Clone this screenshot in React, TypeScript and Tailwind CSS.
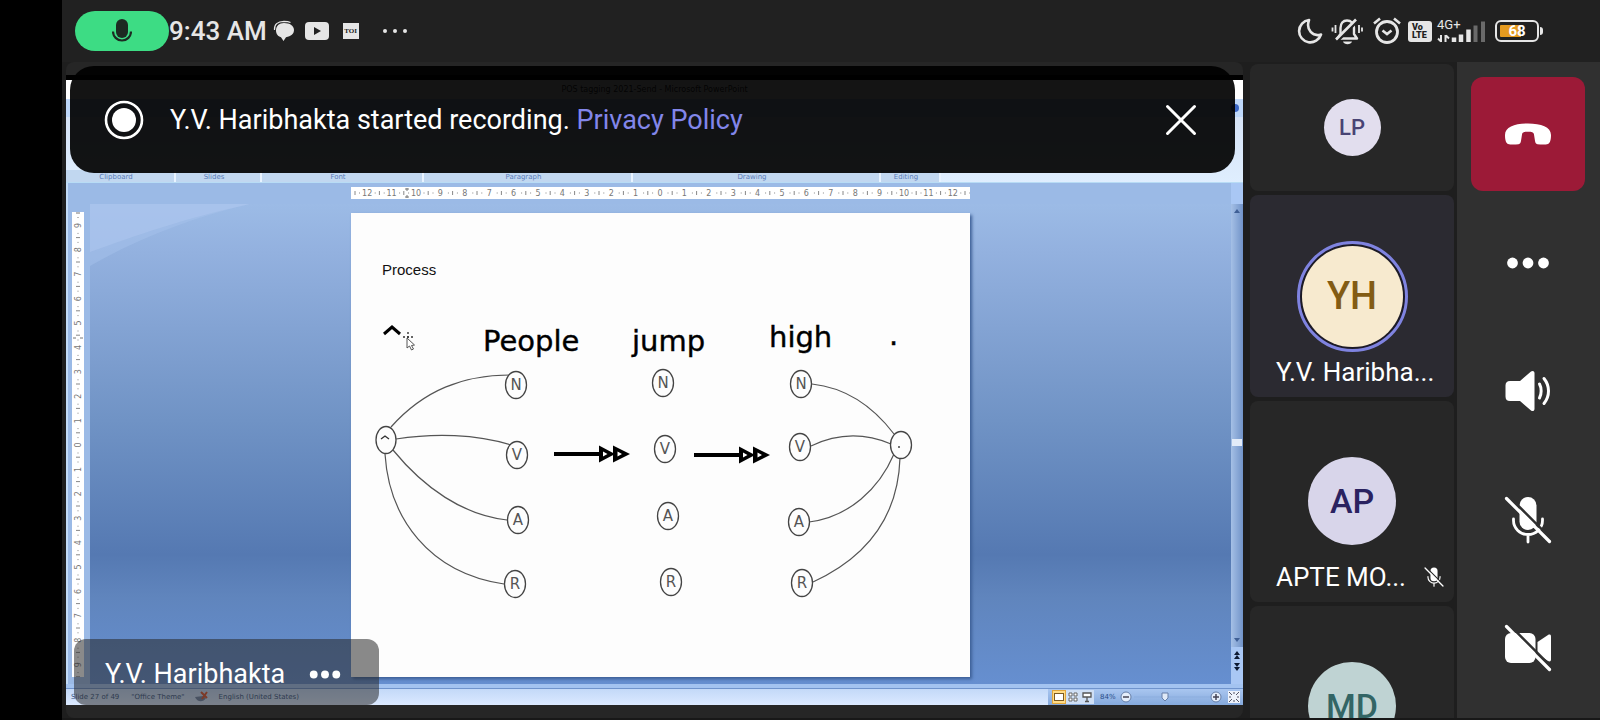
import React from "react";

const UNITS = Array.from({ length: 25 }, (_, i) => i - 12);
const V_UNITS = Array.from({ length: 19 }, (_, i) => i - 9);
const STEP = 24.4;

function MicGlyph({ className }: { className: string }) {
  return (
    <svg viewBox="0 0 20 24" className={className} aria-hidden="true">
      <rect x="4" y="0" width="12" height="19" rx="6" fill="#1d2a22" />
      <path d="M1 12.500a9 9 0 0 0 18 0" fill="none" stroke="#1d2a22" strokeWidth="2.200" />
    </svg>
  );
}

function MicOff({ className, cut }: { className: string; cut: string }) {
  return (
    <svg viewBox="0 0 48 48" className={className} aria-hidden="true">
      <rect x="15.500" y="1" width="17" height="33" rx="8.500" fill="#fff" />
      <path d="M9.500 23v1.500a14.500 14 0 0 0 29 0V23M24 39v7" fill="none" stroke="#fff" strokeWidth="2.800" strokeLinecap="round" />
      <path d="M4.500 0L49.500 45" stroke={cut} strokeWidth="2.600" />
      <path d="M2.500 2.500L45.500 45.500" stroke="#fff" strokeWidth="3.200" strokeLinecap="round" />
    </svg>
  );
}

function VideoOff() {
  return (
    <svg viewBox="0 0 48 48" className="size-12" aria-hidden="true">
      <rect x="1" y="9" width="30.500" height="30" rx="6" fill="#fff" />
      <path d="M33.500 18l10.500-7c1.500-1 3-.5 3 1.500v23c0 2-1.500 2.500-3 1.500l-10.500-7z" fill="#fff" />
      <path d="M4.500 0L49.500 45" stroke="#303030" strokeWidth="2.600" />
      <path d="M2.500 2.500L45.500 45.500" stroke="#fff" strokeWidth="3.200" strokeLinecap="round" />
    </svg>
  );
}

function Speaker() {
  return (
    <svg viewBox="0 0 48 48" className="size-12" aria-hidden="true">
      <path d="M6 14h10L27 4.600c1.500-1.200 3.500-.6 3.500 1.400v36c0 2-2 2.600-3.500 1.400L16 34H6c-3 0-4.500-1.500-4.500-4.500v-11C1.500 15.500 3 14 6 14z" fill="#fff" />
      <path d="M35.500 17c2.200 4 2.200 10 0 14M40 11.500c6 7.500 6 17.500 0 25" fill="none" stroke="#fff" strokeWidth="3" strokeLinecap="round" />
    </svg>
  );
}

function HangUp() {
  return (
    <svg viewBox="0 0 48 24" className="h-6 w-12" aria-hidden="true">
      <path d="M1 13C1 5 11 1.500 24 1.500S47 5 47 13c0 4.500-.8 8-3 9-2.500.8-7 .6-10.500.2-1.800-.2-2.300-2-2.600-4l-1-6.200c-.4-1.800-2-2.300-5.900-2.300s-5.500.5-5.900 2.300l-1 6.200c-.3 2-.8 3.800-2.600 4-3.500.4-8 .6-10.500-.2-2.200-1-3-4.500-3-9z" fill="#fff" />
    </svg>
  );
}

function Dots({ className }: { className: string }) {
  return (
    <svg viewBox="0 0 44 12" className={className} aria-hidden="true">
      <circle cx="6.500" cy="6" r="5.400" fill="#fff" />
      <circle cx="22" cy="6" r="5.400" fill="#fff" />
      <circle cx="37.500" cy="6" r="5.400" fill="#fff" />
    </svg>
  );
}

function StatusBar() {
  return (
    <header className="flex h-[62px] shrink-0 items-center justify-between pr-[57px] pl-[13px] text-[#e6e6e6]">
      <div className="flex items-center">
        <div className="flex h-10 w-[94px] items-center justify-center rounded-full bg-[#3ddc84]">
          <MicGlyph className="h-6 w-5" />
        </div>
        <span className="text-[26px] leading-8 font-medium">9:43 AM</span>
        <svg viewBox="0 0 22 22" className="ml-1.5 size-[22px]" aria-hidden="true">
          <path d="M11 3c6 0 10 2.800 10 7 0 3.800-3 6.500-8 7.200L10.500 21 8 17.200C5 16.500 3 13.800 3 10.500 3 6 6 3 11 3z" fill="#e6e6e6" />
          <path d="M1.500 10C1 4.500 4.500 1.500 11 1.300c3 0 5 .4 6.500 1.200" fill="none" stroke="#e6e6e6" strokeWidth="1.200" />
        </svg>
        <svg viewBox="0 0 24 18" className="ml-2.5 h-[18px] w-6" aria-hidden="true">
          <rect width="24" height="18" rx="4" fill="#e6e6e6" />
          <path d="M9 5l7 4-7 4z" fill="#212121" />
        </svg>
        <span className="ml-3.5 w-4 bg-[#e6e6e6] text-center font-['Liberation_Serif',serif] text-[7px] leading-4 font-bold text-[#212121]">TOI</span>
        <svg viewBox="0 0 26 6" className="ml-[23px] h-1.5 w-[26px]" aria-hidden="true">
          <circle cx="3" cy="3" r="2" fill="#e6e6e6" />
          <circle cx="13" cy="3" r="2" fill="#e6e6e6" />
          <circle cx="23" cy="3" r="2" fill="#e6e6e6" />
        </svg>
      </div>

      <div className="flex items-center">
        <svg viewBox="0 0 26 26" className="size-[26px]" aria-hidden="true">
          <path d="M12 2A11.200 11.200 0 1 0 24 16.500C16 19 8.500 12 12 2z" fill="none" stroke="#e6e6e6" strokeWidth="2.600" strokeLinejoin="round" />
        </svg>
        <svg viewBox="0 0 32 28" className="ml-2 h-7 w-8" aria-hidden="true">
          <path d="M6.500 21.500h19.500l-3-4.500V11c0-4.500-3-7.500-7-7.500S9.500 6.500 9.500 11v6z" fill="none" stroke="#e6e6e6" strokeWidth="2.400" strokeLinejoin="round" />
          <path d="M12 24.500h9c-1 3.500-8 3.500-9 0z" fill="#e6e6e6" />
          <path d="M4.500 8v8M1.500 10.500v4M28 8v8M31 10.500v4" stroke="#e6e6e6" strokeWidth="1.800" />
          <path d="M7 23.500L27 3.500" stroke="#212121" strokeWidth="2.600" />
          <path d="M5 22.500L25 2.500" stroke="#e6e6e6" strokeWidth="2.600" />
        </svg>
        <svg viewBox="0 0 28 28" className="ml-2.5 size-7" aria-hidden="true">
          <circle cx="14" cy="15" r="10.500" fill="none" stroke="#e6e6e6" strokeWidth="2.800" />
          <path d="M1 6.500l6-5M27 6.500l-6-5" stroke="#e6e6e6" strokeWidth="2.600" />
          <path d="M9.500 13.500l4.500 3.500 4.500-3.500" fill="none" stroke="#e6e6e6" strokeWidth="2.600" />
        </svg>
        <span className="ml-[7px] flex h-[21px] w-6 flex-col justify-center rounded-[3px] bg-[#e6e6e6] pl-1 text-[9px] leading-2 font-black text-[#212121]">
          <span>Vo</span>
          <span>LTE</span>
        </span>
        <div className="ml-[5px] flex h-7 w-[50px] flex-col">
          <span className="h-3 text-[13px] leading-4">4G+</span>
          <svg viewBox="0 0 50 28" className="-mt-3 h-7 w-[50px] shrink-0" aria-hidden="true">
            <path d="M4 18v7M1 21.500l3 3M8.500 25v-7M12 21.500l-3-3" stroke="#e6e6e6" strokeWidth="2" fill="none" />
            <path d="M17 25v-4.500M24 25v-7.500M31.500 25V12.500" stroke="#e6e6e6" strokeWidth="4.500" />
            <path d="M38.500 25V8.500M46 25V4.500" stroke="#6a6a6a" strokeWidth="4" />
          </svg>
        </div>
        <div className="ml-2 flex items-center">
          <div className="flex h-[22px] w-11 rounded-[6px] border-2 border-[#e6e6e6] bg-linear-to-r from-[#e59a1f] from-60% to-[#212121] to-60% bg-clip-content p-[3px]">
            <span className="flex-1 text-center text-[15px] leading-3 font-bold text-white">68</span>
          </div>
          <span className="ml-px h-2 w-[3px] rounded-r-sm bg-[#e6e6e6]" />
        </div>
      </div>
    </header>
  );
}

function HorizontalRuler() {
  return (
    <svg viewBox="0 0 619 12" className="h-3 w-full bg-white font-['DejaVu_Sans',sans-serif]" aria-hidden="true">
      {UNITS.map((n) => {
        const x = 309 + n * STEP;
        return (
          <g key={n}>
            <text x={x} y="9" fontSize="8" textAnchor="middle" fill="#777">
              {Math.abs(n)}
            </text>
            <path d={`M${x + 12.2} 4v4M${x + 7.5} 6h1M${x + 16.500} 6h1`} stroke="#888" strokeWidth="1" />
          </g>
        );
      })}
      <path d="M4 4v4M8 6h1" stroke="#888" />
      <path d="M54 2h4M54 10h4M56 1v3M56 8v3" stroke="#777" />
    </svg>
  );
}

function VerticalRuler() {
  return (
    <svg viewBox="0 0 12 465" className="h-[465px] w-3 shrink-0 bg-white font-['DejaVu_Sans',sans-serif]" aria-hidden="true">
      {V_UNITS.map((n) => {
        const y = 233 + n * STEP;
        return (
          <g key={n}>
            <text fontSize="8" textAnchor="middle" fill="#777" transform={`translate(9 ${y}) rotate(-90)`}>
              {Math.abs(n)}
            </text>
            <path d={`M4 ${y + 12.2}h4M6 ${y + 7.500}v1M6 ${y + 16.500}v1`} stroke="#888" strokeWidth="1" />
          </g>
        );
      })}
      <path d="M4 1h4M6 5v1M1 126h3M8 126h3" stroke="#777" />
    </svg>
  );
}

type Node = [number, number, string];
const NODES: Node[] = [
  [165, 172, "N"],
  [166, 242, "V"],
  [167, 307, "A"],
  [164, 371, "R"],
  [312, 170, "N"],
  [314, 236, "V"],
  [317, 303, "A"],
  [320, 369, "R"],
  [450, 171, "N"],
  [449, 234, "V"],
  [448, 309, "A"],
  [451, 370, "R"],
];

function Arrow({ x, y }: { x: number; y: number }) {
  return (
    <g transform={`translate(${x} ${y})`}>
      <path d="M0 0h46" stroke="#000" strokeWidth="4" />
      <path d="M45 -8.500L61 0 45 8.500zM59 -8.500L76 0 59 8.500z" fill="#000" />
      <path d="M49 -2.500l4.500 2.500-4.500 2.500zM63.500 -2.500l4.500 2.500-4.500 2.500z" fill="#fff" />
    </g>
  );
}

function Slide() {
  return (
    <svg viewBox="0 0 619 464" className="w-full bg-[#fdfdfd] font-['DejaVu_Sans',sans-serif] shadow-[2px_2px_3px_#3d5f96]" role="img" aria-label="Part of speech tagging process">
      <text x="31" y="62" fontSize="15" fill="#111" fontFamily="Liberation Sans, sans-serif">Process</text>
      <g fontSize="29" fill="#000" stroke="#000" strokeWidth="0.400">
        <text x="132" y="138">People</text>
        <text x="281" y="138">jump</text>
        <text x="418" y="134">high</text>
        <text x="538" y="132">.</text>
      </g>
      <path d="M33 121l8-7 8 7" fill="none" stroke="#000" strokeWidth="3" />
      <path d="M57 119v10M52 124h10" stroke="#333" strokeWidth="1.400" strokeDasharray="2 2" />
      <path d="M56 125v10l2.500-2 2 4 2-1-2-3.500 3-.5z" fill="#fff" stroke="#555" />

      <g fill="none" stroke="#555" strokeWidth="1.200">
        <path d="M40 214C73 177 112 162 160 162" />
        <path d="M45 226C83 220 125 221 160 232" />
        <path d="M42 237C73 275 112 302 156 307" />
        <path d="M34 241C38 305 78 360 153 371" />
        <path d="M461 171C497 175 524 196 543 221" />
        <path d="M460 233C487 220 514 220 540 231" />
        <path d="M458 309C498 304 528 276 543 241" />
        <path d="M462 369C514 345 547 306 549 245" />
      </g>
      <g fill="#fdfdfd" stroke="#444" strokeWidth="1.300">
        <ellipse cx="35" cy="227" rx="10" ry="13.500" />
        <ellipse cx="550" cy="232" rx="10.500" ry="13.500" />
      </g>
      <path d="M30 226l4-3 4 3" fill="none" stroke="#333" strokeWidth="1.400" />
      <circle cx="548" cy="234" r="1" fill="#444" />
      {NODES.map(([x, y, tag]) => (
        <g key={`${x}-${tag}`}>
          <ellipse cx={x} cy={y} rx="10.500" ry="13.500" fill="#fdfdfd" stroke="#444" strokeWidth="1.300" />
          <text x={x} y={y + 5} fontSize="15" textAnchor="middle" fill="#555">{tag}</text>
        </g>
      ))}
      <Arrow x={203} y={241} />
      <Arrow x={343} y={242} />
    </svg>
  );
}

const GROUPS = [
  { name: "Clipboard", cls: "w-[110px]" },
  { name: "Slides", cls: "w-[86px]" },
  { name: "Font", cls: "w-[162px]" },
  { name: "Paragraph", cls: "w-[209px]" },
  { name: "Drawing", cls: "w-[248px]" },
  { name: "Editing", cls: "w-[60px]" },
];

function Ribbon() {
  return (
    <div className="shrink-0 font-['DejaVu_Sans',sans-serif]">
      <div className="flex h-[19px] items-center justify-center bg-white text-[8px] text-[#333]">
        POS tagging 2021-Send - Microsoft PowerPoint
      </div>
      <div className="flex h-[18px] items-center justify-end bg-[#bfd8fa] pr-1">
        <span className="size-2 rounded-full bg-[#3b66c4]" />
      </div>
      <div className="flex h-[66px] items-end border-b border-[#b8dcf5] bg-linear-to-b from-[#d6e3f6] to-[#dfeefe]">
        {GROUPS.map((g) => (
          <div key={g.name} className={`${g.cls} h-3 border-r-2 border-[#e8f3ff] bg-[#c1d7f0] pt-[3px] pr-2 text-center text-[7px] leading-2 text-[#5a7cb8]`}>
            {g.name}
          </div>
        ))}
      </div>
    </div>
  );
}

function EditorStatus() {
  return (
    <div className="flex h-[17px] shrink-0 items-center justify-between border-t border-[#6f93cc] bg-linear-to-b from-[#c3d9f8] to-[#dbe9ff] font-['DejaVu_Sans',sans-serif] text-[7px] text-[#36537f]">
      <div className="flex items-center pl-[5px]">
        <span>Slide 27 of 49</span>
        <span className="ml-3">"Office Theme"</span>
        <svg viewBox="0 0 14 12" className="ml-2.5 h-3 w-3.5" aria-hidden="true">
          <path d="M0 6c2 5 8 6 11 1L8 5z" fill="#7286a8" />
          <path d="M6 1l6 6M12 1L7 8" stroke="#e0522c" strokeWidth="2" />
        </svg>
        <span className="ml-2.5">English (United States)</span>
      </div>
      <div className="flex h-full items-center bg-linear-to-b from-[#a9c6f0] to-[#85a9dc] pr-[3px] pl-1">
        <span className="flex h-3.5 w-[14px] items-center justify-center border border-[#e0a63c] bg-[#ffdc86]">
          <span className="h-2 w-2.5 border border-[#7b5a22] bg-white" />
        </span>
        <svg viewBox="0 0 28 14" className="h-3.5 w-7 bg-[#cfdff5]" aria-hidden="true">
          <path d="M3 3h3v3H3zM8 3h3v3H8zM3 8h3v3H3zM8 8h3v3H8z" fill="#fff" stroke="#666" />
          <path d="M17 3h8v4h-8zM21 7v4M19 11.500h4" fill="#fff" stroke="#555" strokeWidth="1.300" />
        </svg>
        <span className="ml-1.5 w-5 text-[#284b86]">84%</span>
        <svg viewBox="0 0 102 14" className="h-3.5 w-[102px]" aria-hidden="true">
          <path d="M14 7h76" stroke="#8badde" />
          <circle cx="6" cy="7" r="5" fill="#e5eefb" stroke="#667fa8" />
          <path d="M3 7h6" stroke="#445" strokeWidth="1.500" />
          <path d="M42 3h6v5l-3 3-3-3z" fill="#dfe9f7" stroke="#667fa8" />
          <circle cx="96" cy="7" r="5" fill="#e5eefb" stroke="#667fa8" />
          <path d="M93 7h6M96 4v6" stroke="#445" strokeWidth="1.500" />
        </svg>
        <svg viewBox="0 0 12 12" className="ml-1.5 size-3 bg-[#eef3fb]" aria-hidden="true">
          <path d="M1 1l3 3M11 1L8 4M1 11l3-3M11 11L8 8M6 1v2M6 9v2M1 6h2M9 6h2" stroke="#556" />
        </svg>
      </div>
    </div>
  );
}

function SharedScreen() {
  return (
    <main className="relative flex min-w-0 flex-1 flex-col overflow-hidden rounded-lg bg-[#262626] pt-[13px] pb-[13px]">
      <div className="h-[5px] shrink-0 bg-black" />
      <Ribbon />
      <div className="flex min-h-0 flex-1 border-b-4 border-[#a3c3f0] bg-[#9bbae6]">
        <div className="flex w-6 shrink-0 justify-center border-l-2 border-[#c3dcf8] pt-[29px] pr-0.5">
          <VerticalRuler />
        </div>
        <div className="flex min-w-0 flex-1 flex-col pt-1">
          <div className="mx-auto w-[619px] max-w-full pb-[5px]">
            <HorizontalRuler />
          </div>
          <div className="relative flex min-h-0 flex-1 justify-center bg-[linear-gradient(#9cbbe6_0%,#93b1df_10%,#83a3d3_26%,#7093c5_45%,#5579b2_73%,#6085bd_82%,#668fd0_100%)] pt-[9px]">
            <svg viewBox="0 0 160 62" className="absolute top-0 left-0 h-[62px] w-40" aria-hidden="true">
              <path d="M0 0h160C100 14 45 36 0 62z" fill="#a5c1ec" opacity="0.500" />
              <path d="M0 0h160C95 14 45 32 0 48z" fill="#b0c8f0" opacity="0.500" />
            </svg>
            <div className="relative w-[619px] max-w-full">
              <Slide />
            </div>
          </div>
        </div>
        <div className="flex w-3 shrink-0 flex-col items-center bg-[#a9c7f4] pt-[21px]">
          <div className="flex w-full flex-1 flex-col items-center bg-linear-to-r from-[#a5c0e6] to-[#7193c8] py-1">
            <svg viewBox="0 0 8 6" className="h-1.5 w-2" aria-hidden="true"><path d="M1 5h6L4 1z" fill="#3f5f95" /></svg>
            <span className="grow-[54]" />
            <span className="h-[7px] w-2.5 bg-[#e3ecf9]" />
            <span className="grow-[46]" />
            <svg viewBox="0 0 8 6" className="h-1.5 w-2" aria-hidden="true"><path d="M1 1h6L4 5z" fill="#3f5f95" /></svg>
          </div>
          <svg viewBox="0 0 10 37" className="h-[37px] w-2.5" aria-hidden="true">
            <path d="M2 8l3-4 3 4zM2 12l3-4 3 4zM2 16h6l-3 4zM2 20h6l-3 4z" fill="#0d1a33" />
          </svg>
        </div>
      </div>
      <EditorStatus />

      <div className="absolute bottom-[13px] left-2 flex h-[66px] w-[305px] items-center rounded-xl bg-[#262626]/54 pt-1 pl-[31px] text-[27px] leading-8 text-white">
        <span>Y.V. Haribhakta</span>
        <button type="button" aria-label="Presenter options" className="ml-6">
          <Dots className="h-[9px] w-8" />
        </button>
      </div>

      <div role="status" className="absolute inset-x-1 top-1 mr-1 flex h-[107px] items-center rounded-3xl bg-black/92 pt-px pr-[38px] pl-[34px] text-[27px] leading-8 text-white">
        <svg viewBox="0 0 40 40" className="size-10" aria-hidden="true">
          <circle cx="20" cy="20" r="18" fill="none" stroke="#fff" strokeWidth="2.600" />
          <circle cx="20" cy="20" r="12" fill="#fff" />
        </svg>
        <p className="ml-[26px] flex-1">
          Y.V. Haribhakta started recording. <a href="#privacy" className="text-[#8286ea]">Privacy Policy</a>
        </p>
        <button type="button" aria-label="Dismiss">
          <svg viewBox="0 0 32 32" className="size-8" aria-hidden="true">
            <path d="M2.500 2.500l27 27M29.500 2.500L2.500 29.500" stroke="#fff" strokeWidth="3" strokeLinecap="round" />
          </svg>
        </button>
      </div>
    </main>
  );
}

function Participants() {
  return (
    <aside className="flex w-[204px] shrink-0 flex-col gap-1 overflow-hidden pt-0.5">
      <div className="flex h-[127px] shrink-0 items-center justify-center rounded-lg bg-[#272727]">
        <span className="flex size-[57px] items-center justify-center rounded-full bg-[#e2deee] text-[22px] font-medium text-[#484374]">LP</span>
      </div>
      <div className="flex h-[202px] shrink-0 flex-col items-center rounded-lg bg-[#2b2a31] pt-[46px]">
        <span className="flex size-[111px] items-center justify-center rounded-full border-3 border-[#7f83e0] bg-[#1c1a26]">
          <span className="flex size-[101px] shrink-0 items-center justify-center rounded-full bg-[#f7eacf] text-[38px] font-medium text-[#835c14]">YH</span>
        </span>
        <span className="mt-1 w-full truncate pr-4 pl-[26px] text-[26px] leading-8 text-white">Y.V. Haribha...</span>
      </div>
      <div className="flex h-[201px] shrink-0 flex-col items-center rounded-lg bg-[#272727] pt-14">
        <span className="flex size-[88px] shrink-0 items-center justify-center rounded-full bg-[#d8d5ea] text-[34px] font-medium text-[#2a2260]">AP</span>
        <div className="mt-4 flex w-full items-center justify-between pr-2.5 pl-[26px]">
          <span className="text-[26px] leading-8 text-white">APTE MO...</span>
          <MicOff className="size-5" cut="#272727" />
        </div>
      </div>
      <div className="flex h-[201px] shrink-0 flex-col items-center rounded-t-lg bg-[#272727] pt-14">
        <span className="flex size-[88px] shrink-0 items-center justify-center rounded-full bg-[#bfd3d3] text-[34px] font-medium text-[#336565]">MD</span>
      </div>
    </aside>
  );
}

function Controls() {
  const plain = "flex h-[114px] items-center justify-center rounded-xl";
  return (
    <nav aria-label="Call controls" className="flex w-[143px] shrink-0 flex-col justify-between bg-[#303030] pt-[15px] pr-[15px] pb-[13px] pl-[14px]">
      <button type="button" aria-label="Hang up" className="flex h-[114px] items-center justify-center rounded-xl bg-[#9c1a37]">
        <HangUp />
      </button>
      <button type="button" aria-label="More options" className={plain}>
        <Dots className="h-3 w-11" />
      </button>
      <button type="button" aria-label="Speaker" className={plain}>
        <Speaker />
      </button>
      <button type="button" aria-label="Unmute" className={plain}>
        <MicOff className="size-12" cut="#303030" />
      </button>
      <button type="button" aria-label="Turn camera on" className={plain}>
        <VideoOff />
      </button>
    </nav>
  );
}

export default function App() {
  return (
    <div className="flex h-screen overflow-hidden bg-black pl-[62px] font-['Roboto',sans-serif]">
      <div className="flex min-w-0 flex-1 flex-col bg-[#212121]">
        <StatusBar />
        <div className="flex min-h-0 flex-1 border-b-2 border-[#181818] bg-[#1e1e1e]">
          <div className="flex min-w-0 flex-1 gap-[7px] pr-[3px] pl-1">
            <SharedScreen />
            <Participants />
          </div>
          <Controls />
        </div>
      </div>
    </div>
  );
}
